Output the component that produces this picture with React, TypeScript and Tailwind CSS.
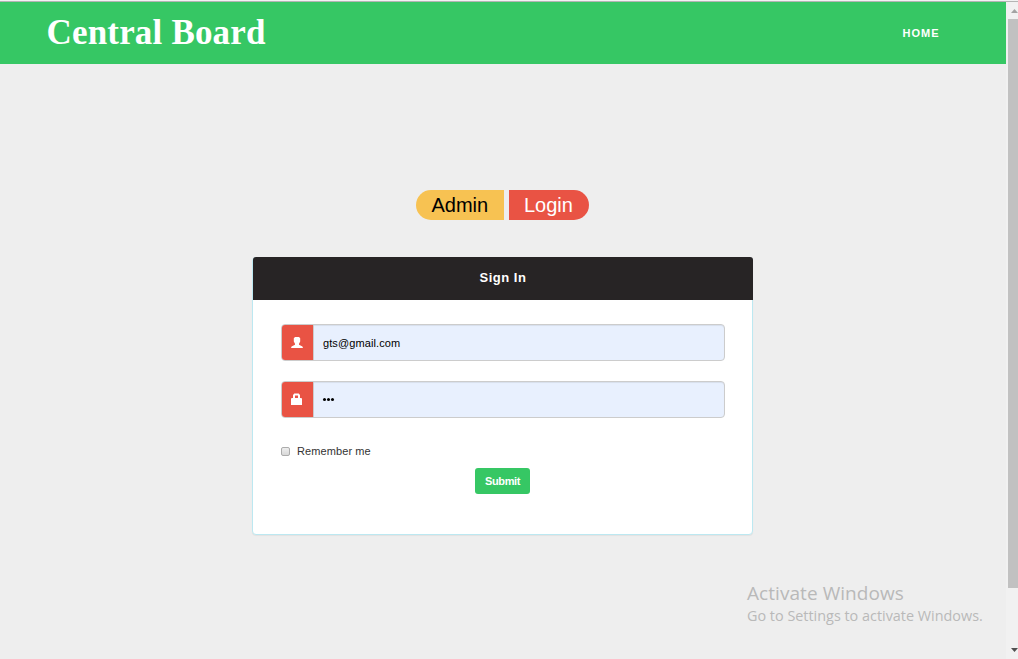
import React from "react";

const inputShadow = "shadow-[inset_0_1px_1px_rgba(0,0,0,0.075)]";

function UserIcon() {
  return (
    <svg width="12" height="12" viewBox="0 0 12 12" fill="#fff">
      <path d="M4 0h4l1.2 1.2v3.3L8 6.8v1l3 1.4.8.8v1H.2v-1l.8-.8 3-1.4v-1L2.8 4.5V1.2z" />
    </svg>
  );
}

function LockIcon() {
  return (
    <svg className="-mt-px" width="12" height="12" viewBox="0 0 12 12" fill="#fff">
      <path fillRule="evenodd" d="M0 5.5 1 5h1V2l1.3-1.5h4.4L9 2v3h1l1 .5V12H0zM4 5h3V2.5H4z" />
    </svg>
  );
}

function Field({ icon, className, children }: { icon: React.ReactNode; className: string; children: React.ReactNode }) {
  return (
    <div className={`flex h-[37px] w-[444px] overflow-hidden rounded-[4px] border border-[#ccc] bg-[#e8f0fe] ${inputShadow} ${className}`}>
      <div className="flex w-8 shrink-0 items-center border-r border-[#ccc] bg-[#e95344] pl-[9px]">{icon}</div>
      <div className="flex items-center pl-[9px] text-[11px] tracking-[0.1px] text-black">{children}</div>
    </div>
  );
}

export default function App() {
  return (
    <div className="flex h-[659px] w-[1018px] overflow-hidden bg-[#eee] font-['Liberation_Sans',Arial,sans-serif]">
      <div className="flex w-[1006px] shrink-0 flex-col">
        <div className="h-[2px] shrink-0 border-b border-[#b4b4b4] bg-[#f2f2f2]" />
        <header className="flex h-[62px] shrink-0 items-center justify-between bg-[#36c764] pr-[66.5px] pl-[46.5px] text-white">
          <h1 className="font-['Liberation_Serif','Times_New_Roman',serif] text-[35px] leading-[62px] font-bold tracking-[0.18px] whitespace-nowrap">Central Board</h1>
          <a className="text-[11px] font-bold tracking-[1px]">HOME</a>
        </header>
        <main className="flex flex-col items-center pt-[126px]">
          <div className="mr-[1px] flex gap-[5px] text-[20px] leading-[30px]">
            <span className="h-[30px] w-[88px] rounded-l-full bg-[#f7c252] pl-[15.5px] text-black">Admin</span>
            <span className="h-[30px] w-[80px] rounded-r-full bg-[#e95344] pl-[15px] text-white">Login</span>
          </div>
          <section className="mt-[37px] ml-[-1px] h-[278px] w-[501px] rounded-[4px] border border-[#bce8f1] bg-white shadow-[0_1px_1px_rgba(0,0,0,0.05)]">
            <h2 className="-mt-px -mr-px h-[43px] rounded-t-[3px] bg-[#272425] text-center text-[13px] leading-[41px] font-bold tracking-[0.5px] text-white">Sign In</h2>
            <div className="flex flex-col pt-6 pl-7">
              <Field icon={<UserIcon />} className="">
                <span className="pt-[2px] leading-[15px]">gts@gmail.com</span>
              </Field>
              <Field icon={<LockIcon />} className="mt-5">
                <span className="flex gap-px">
                  <i className="size-[3px] rounded-full bg-black" />
                  <i className="size-[3px] rounded-full bg-black" />
                  <i className="size-[3px] rounded-full bg-black" />
                </span>
              </Field>
              <label className="mt-[26px] flex h-[15px] items-center gap-[7px] text-[11px] tracking-[0.1px] text-[#333]">
                <span className="size-[9px] rounded-[2px] border border-[#acacac] bg-linear-to-b from-[#eee] to-[#d8d8d8]" />
                Remember me
              </label>
            </div>
            <button className="mt-[9px] ml-[222px] block h-[26px] w-[55px] rounded-[3px] bg-[#36c764] text-[11px] font-bold tracking-[-0.35px] text-white">Submit</button>
          </section>
        </main>
        <div className="mt-[45px] ml-[747px] font-['Open_Sans',sans-serif] whitespace-nowrap text-[#b9b9b9]">
          <p className="text-[19px] leading-[26px] tracking-[0.06px]">Activate Windows</p>
          <p className="text-[14.4px] leading-[20px]">Go to Settings to activate Windows.</p>
        </div>
      </div>
      <div className="flex w-3 shrink-0 flex-col items-end bg-[#f1f1f1]">
        <div className="h-px w-full shrink-0 bg-[#f2f2f2]" />
        <div className="h-px w-full shrink-0 bg-[#b4b4b4]" />
        <svg className="h-[17px] w-[10px] shrink-0" viewBox="0 0 10 17">
          <path d="M3 11 6.5 7 10 11z" fill="#a3a3a3" />
        </svg>
        <div className="h-[569px] w-[10px] shrink-0 bg-[#c1c1c1]" />
        <svg className="mt-[53px] h-[18px] w-[10px] shrink-0" viewBox="0 0 10 18">
          <path d="M3 7h7L6.5 11z" fill="#505050" />
        </svg>
      </div>
    </div>
  );
}
